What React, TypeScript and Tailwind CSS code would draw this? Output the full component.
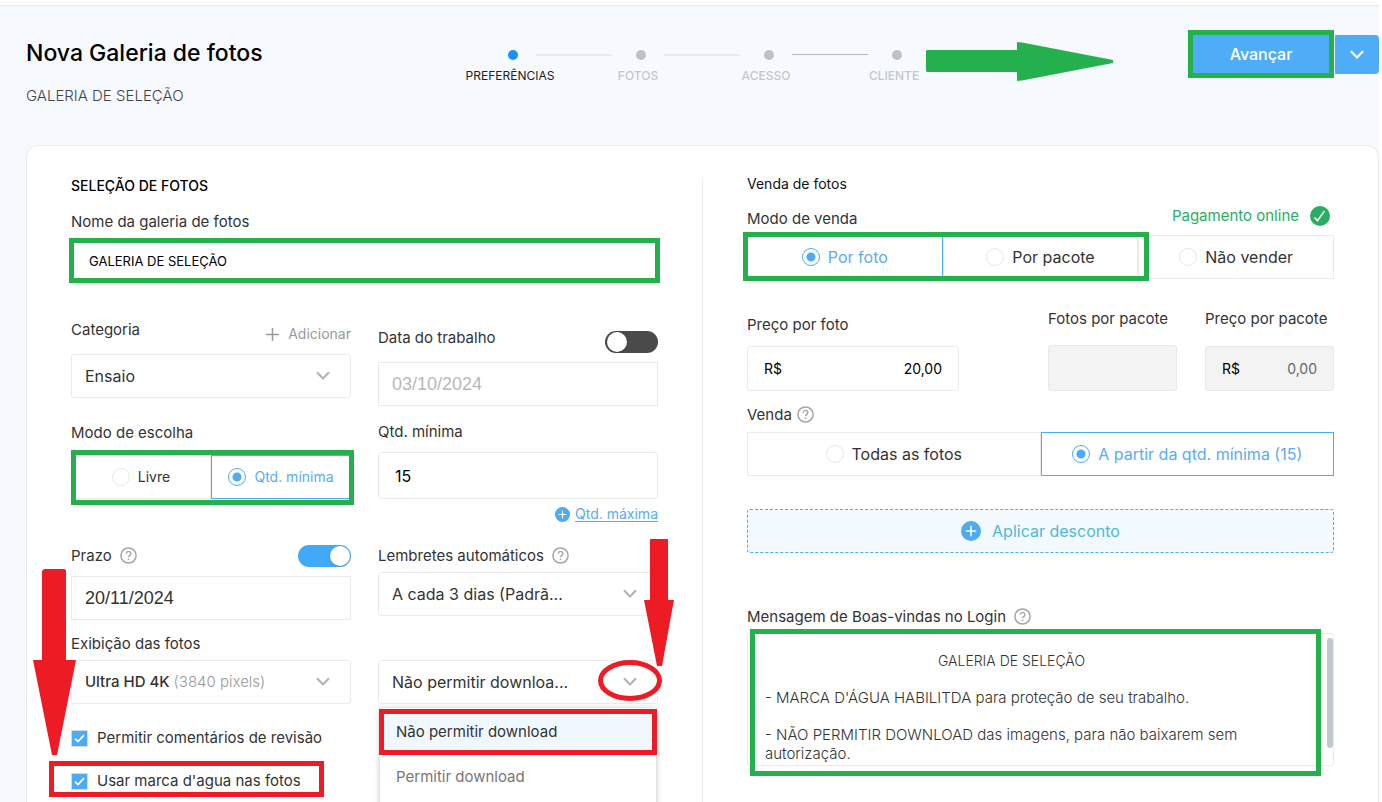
import { useState, type ReactNode } from "react";

const steps = ["PREFERÊNCIAS", "FOTOS", "ACESSO", "CLIENTE"];

function Chevron({ className = "" }: { className?: string }) {
    return (
        <svg
            className={`pointer-events-none ${className}`}
            width="14"
            height="10"
            viewBox="0 0 14 10"
            fill="none"
            stroke="currentColor"
            strokeWidth="2.2"
            aria-hidden="true"
        >
            <path d="M1 1.2 7 7.4l6-6.2" />
        </svg>
    );
}

function HelpIcon() {
    return (
        <svg className="mb-0.5" width="17" height="17" viewBox="0 0 17 17" fill="none" stroke="#a6a6a6" aria-hidden="true">
            <circle cx="8.5" cy="8.5" r="7.6" strokeWidth="1.5" />
            <path d="M6.2 6.7a2.3 2.3 0 1 1 3.6 1.9c-.9.6-1.3.9-1.3 1.7" strokeWidth="1.4" />
            <path d="M8.5 11.5v1.6" strokeWidth="1.5" />
        </svg>
    );
}

function PlusCircle({ size }: { size: number }) {
    return (
        <svg width={size} height={size} viewBox="0 0 20 20" aria-hidden="true">
            <circle cx="10" cy="10" r="10" fill="#4dabf5" />
            <path d="M10 4.8v10.4M4.8 10h10.4" stroke="#fff" strokeWidth="1.5" />
        </svg>
    );
}

function Switch({ label, defaultChecked }: { label: string; defaultChecked?: boolean }) {
    return (
        <span className="relative block h-[22px] w-[53px] shrink-0">
            <input
                type="checkbox"
                role="switch"
                aria-label={label}
                defaultChecked={defaultChecked}
                className="peer block h-full w-full appearance-none rounded-full bg-[#4a4a4a] checked:bg-[#42a9f8]"
            />
            <span className="pointer-events-none absolute top-px left-[2px] size-5 rounded-full bg-white shadow peer-checked:left-[32px]" />
        </span>
    );
}

type RadioProps = {
    name: string;
    children: ReactNode;
    defaultChecked?: boolean;
    small?: boolean;
};

function Radio({ name, children, defaultChecked, small }: RadioProps) {
    return (
        <label
            className={`flex h-11 flex-1 items-center justify-center gap-2 border border-[#ebebeb] text-[#333] has-checked:border-[#4dabf5] has-checked:text-[#5aacf5] ${
                small ? "text-sm" : "text-base"
            }`}
        >
            <input
                type="radio"
                name={name}
                defaultChecked={defaultChecked}
                className="size-[18px] appearance-none rounded-full border border-[#e6e6e6] checked:border-[#4dabf5] checked:bg-[radial-gradient(circle,#4dabf5_4px,transparent_5px)]"
            />
            {children}
        </label>
    );
}

function Check({ children }: { children: ReactNode }) {
    return (
        <label className="flex items-center gap-[9px] text-[15px] leading-5">
            <span className="relative size-[17px]">
                <input
                    type="checkbox"
                    defaultChecked
                    className="block size-full appearance-none border border-[#d4dde4] checked:bg-[#4dabf5]"
                />
                <svg
                    className="pointer-events-none absolute inset-0"
                    width="17"
                    height="17"
                    viewBox="0 0 17 17"
                    fill="none"
                    stroke="#fff"
                    strokeWidth="1.7"
                    aria-hidden="true"
                >
                    <path d="m4 8.6 3 3 6-6.4" />
                </svg>
            </span>
            {children}
        </label>
    );
}

// Highlight frame drawn over a control
function Mark({ className }: { className: string }) {
    return <div className={`pointer-events-none absolute z-10 border-5 ${className}`} />;
}

function Header() {
    return (
        <header className="flex h-[139px] items-start pl-[26px]">
            <div className="w-[438px] shrink-0 pt-8">
                <h1 className="text-[23px] leading-[30px] font-medium text-black">Nova Galeria de fotos</h1>
                <p className="mt-[18px] text-[15px] leading-5 font-light text-[#444]">GALERIA DE SELEÇÃO</p>
            </div>
            <ol className="flex shrink-0 pt-11">
                {steps.map((step, i) => (
                    <li key={step} className="flex">
                        {i > 0 && (
                            <span
                                className={`-mx-5 mt-1 w-[76px] ${
                                    i === 3 ? "h-px bg-[#b8b8b8]" : "h-[2px] bg-[#e9eaec]"
                                }`}
                            />
                        )}
                        <div className="flex w-[92px] flex-col items-center">
                            <span
                                className={`ml-[6px] size-[10px] rounded-full ${
                                    i === 0 ? "bg-[#1890ff]" : "bg-[#c1c1c1]"
                                }`}
                            />
                            <span
                                className={`mt-[6px] text-xs leading-5 ${
                                    i === 0 ? "text-[#222]" : "font-medium text-[#c5c7ca]"
                                }`}
                            >
                                {step}
                            </span>
                        </div>
                    </li>
                ))}
            </ol>
            <svg className="mt-9 -ml-[14px] shrink-0" width="188" height="39" viewBox="0 0 188 39" aria-hidden="true">
                <path d="M1 8h90V0l5 .6L187 18v3L96 38.4l-5 .6v-9H1l-1-1V9z" fill="#24b14d" />
            </svg>
            <div className="ml-auto flex pt-6">
                <div className="relative flex h-12 w-[146px] p-[5px]">
                    <button className="flex-1 bg-[#4fadf7] text-base font-medium text-white">Avançar</button>
                    <Mark className="inset-0 border-[#24b14d]" />
                </div>
                <button
                    aria-label="Mais opções"
                    className="mt-[5px] ml-px flex h-[39px] w-11 items-center justify-center rounded-r bg-[#4fadf7] text-white"
                >
                    <Chevron />
                </button>
            </div>
        </header>
    );
}

function CategoryColumn() {
    return (
        <div>
            <div className="flex h-[38px] items-start justify-between pt-1">
                <label htmlFor="categoria" className="text-[15px] leading-5">
                    Categoria
                </label>
                <button className="mt-1 flex items-center gap-[9px] text-sm leading-5 text-[#999]">
                    <svg width="13" height="13" viewBox="0 0 13 13" stroke="#999" strokeWidth="1.5" aria-hidden="true">
                        <path d="M6.5 0v13M0 6.5h13" />
                    </svg>
                    Adicionar
                </button>
            </div>
            <div className="relative">
                <select
                    id="categoria"
                    className="h-11 w-full appearance-none rounded-[3px] border border-[#ebebeb] bg-white px-[13px] text-base"
                >
                    <option>Ensaio</option>
                </select>
                <Chevron className="absolute top-[17px] right-[21px] text-[#b4b4b4]" />
            </div>

            <fieldset className="mt-[25px]">
                <legend className="text-[15px] leading-5">Modo de escolha</legend>
                <div className="relative mt-3 flex">
                    <Radio name="escolha" small>
                        Livre
                    </Radio>
                    <Radio name="escolha" small defaultChecked>
                        Qtd. mínima
                    </Radio>
                    <Mark className="-top-[5px] -right-[3px] left-0 h-[55px] border-[#24b14d]" />
                </div>
            </fieldset>

            <div className="relative mt-[46px]">
                <div className="flex h-[22px] items-center justify-between">
                    <label htmlFor="prazo" className="flex items-center gap-2 text-[15px] leading-5">
                        Prazo <HelpIcon />
                    </label>
                    <Switch label="Prazo" defaultChecked />
                </div>
                <input
                    id="prazo"
                    defaultValue="20/11/2024"
                    className="mt-[9px] block h-11 w-full border border-[#ebebeb] px-[13px] font-['Liberation_Sans',sans-serif] text-lg"
                />
                <svg
                    className="pointer-events-none absolute top-6 -left-[38px] z-10"
                    width="43"
                    height="187"
                    viewBox="0 0 43 187"
                    aria-hidden="true"
                >
                    <path d="M11 0h20l2 1v90h10l-1 5-18 90h-5L1 96l-1-5h9V2z" fill="#ed1c24" />
                </svg>
            </div>

            <div className="mt-[14px]">
                <p id="exibicao" className="text-[15px] leading-5">
                    Exibição das fotos
                </p>
                <button
                    aria-labelledby="exibicao"
                    aria-haspopup="listbox"
                    className="mt-[6px] flex h-11 w-full items-center rounded-[3px] border border-[#ebebeb] px-[13px] text-[15px]"
                >
                    <span className="font-medium">Ultra HD 4K</span>
                    <span className="ml-1 font-light text-[#999]">(3840 pixels)</span>
                    <Chevron className="mr-[7px] ml-auto text-[#b4b4b4]" />
                </button>
            </div>

            <div className="mt-6">
                <Check>Permitir comentários de revisão</Check>
            </div>
            <div className="relative mt-[23px]">
                <Check>Usar marca d'agua nas fotos</Check>
                <Mark className="-top-[10px] -left-[22px] h-9 w-[275px] border-[#ed1c24]" />
            </div>
        </div>
    );
}

function DateColumn() {
    return (
        <div className="pt-3">
            <div className="flex h-[25px] items-start justify-between">
                <label htmlFor="data" className="text-[15px] leading-5">
                    Data do trabalho
                </label>
                <div className="pt-[3px]">
                    <Switch label="Data do trabalho" />
                </div>
            </div>
            <input
                id="data"
                defaultValue="03/10/2024"
                className="mt-[9px] block h-11 w-full border border-[#ebebeb] px-[13px] font-['Liberation_Sans',sans-serif] text-lg text-[#b8b8b8]"
            />

            <label htmlFor="minima" className="mt-4 block text-[15px] leading-5">
                Qtd. mínima
            </label>
            <input
                id="minima"
                defaultValue="15"
                className="mt-[10px] block h-[47px] w-full rounded-[3px] border border-[#ebebeb] px-4 text-base text-black"
            />
            <div className="mt-[5px] flex items-center justify-end gap-[5px] text-sm leading-5">
                <PlusCircle size={15} />
                <a href="#maxima" className="text-[#5aacf5] underline underline-offset-2">
                    Qtd. máxima
                </a>
            </div>

            <div className="relative mt-[22px]">
                <label htmlFor="lembretes" className="flex items-center gap-2 text-[15px] leading-5">
                    Lembretes automáticos <HelpIcon />
                </label>
                <div className="relative mt-[6px]">
                    <select
                        id="lembretes"
                        className="h-11 w-full appearance-none rounded-[3px] border border-[#ebebeb] bg-white px-[13px] text-base"
                    >
                        <option>A cada 3 dias (Padrã...</option>
                    </select>
                    <Chevron className="absolute top-[17px] right-[21px] text-[#b4b4b4]" />
                </div>
                <svg
                    className="pointer-events-none absolute -top-[7px] -right-4 z-10"
                    width="30"
                    height="127"
                    viewBox="0 0 30 127"
                    aria-hidden="true"
                >
                    <path d="M6 0h18v61h6l-1 5-11 61h-5L1 66l-1-5h6z" fill="#ed1c24" />
                </svg>
            </div>

            <DownloadSelect />
        </div>
    );
}

function DownloadSelect() {
    const [open, setOpen] = useState(true);

    return (
        <div className="relative mt-11">
            <button
                aria-haspopup="listbox"
                aria-expanded={open}
                onClick={() => setOpen(!open)}
                className="flex h-11 w-full items-center rounded-[3px] border border-[#ebebeb] px-[13px] text-base"
            >
                Não permitir downloa...
                <Chevron className="mr-[7px] ml-auto text-[#b4b4b4]" />
            </button>
            <svg
                className="pointer-events-none absolute top-0 -right-1 z-10"
                width="64"
                height="41"
                viewBox="0 0 64 41"
                aria-hidden="true"
            >
                <ellipse cx="32" cy="20.5" rx="29.5" ry="18" fill="none" stroke="#ed1c24" strokeWidth="5" />
            </svg>
            {open && (
                <ul
                    role="listbox"
                    className="absolute top-12 right-0.5 left-0.5 rounded-sm bg-white pb-10 text-[15px] shadow-[0_1px_6px_rgba(0,0,0,0.25)]"
                >
                    <li role="option" aria-selected="true" className="relative mt-px bg-[#f0f8ff] px-4 py-[13px] leading-5">
                        Não permitir download
                        <Mark className="-inset-x-px inset-y-0 border-[#ed1c24]" />
                    </li>
                    <li role="option" aria-selected="false" className="px-4 py-3 leading-5 text-[#777]">
                        Permitir download
                    </li>
                </ul>
            )}
        </div>
    );
}

function SaleSection() {
    return (
        <section className="flex-1 pl-11">
            <h2 className="text-sm leading-5 text-[#111]">Venda de fotos</h2>
            <div className="mt-3 flex h-[29px] items-start justify-between">
                <p className="pt-[3px] text-[15px] leading-5">Modo de venda</p>
                <p className="flex items-center gap-[11px] pr-1 text-[15px] leading-5 text-[#29ae61]">
                    Pagamento online
                    <svg width="20" height="20" viewBox="0 0 20 20" fill="none" aria-hidden="true">
                        <circle cx="10" cy="10" r="10" fill="#27ae60" />
                        <path d="m4.5 11.5 3 3.2 6.8-9.6" stroke="#fff" strokeWidth="1.6" />
                    </svg>
                </p>
            </div>
            <div className="relative flex" role="radiogroup" aria-label="Modo de venda">
                <Radio name="modo-venda" defaultChecked>
                    Por foto
                </Radio>
                <Radio name="modo-venda">Por pacote</Radio>
                <Radio name="modo-venda">Não vender</Radio>
                <Mark className="-top-[3px] right-[185px] -bottom-0.5 -left-1 border-[#24b14d]" />
            </div>

            <div className="mt-[30px] flex items-end gap-7 text-[15px]">
                <div>
                    <label htmlFor="preco-foto" className="block leading-5">
                        Preço por foto
                    </label>
                    <div className="mt-[11px] flex h-[45px] w-[212px] items-center rounded-[3px] border border-[#ebebeb] px-4 text-sm text-black">
                        <span>R$</span>
                        <input
                            id="preco-foto"
                            defaultValue="20,00"
                            className="w-full min-w-0 text-right"
                        />
                    </div>
                </div>
                <div className="ml-auto w-[129px]">
                    <label htmlFor="fotos-pacote" className="block leading-5 whitespace-nowrap">
                        Fotos por pacote
                    </label>
                    <input
                        id="fotos-pacote"
                        disabled
                        className="mt-4 block h-[46px] w-full rounded-[3px] border border-[#e8e8e8] bg-[#f3f3f3] px-4"
                    />
                </div>
                <div className="w-[129px]">
                    <label htmlFor="preco-pacote" className="block leading-5 whitespace-nowrap">
                        Preço por pacote
                    </label>
                    <div className="mt-[17px] flex h-[45px] items-center rounded-[3px] border border-[#e8e8e8] bg-[#f3f3f3] px-4 text-sm">
                        <span className="text-black">R$</span>
                        <input
                            id="preco-pacote"
                            defaultValue="0,00"
                            disabled
                            className="w-full min-w-0 text-right text-[#666]"
                        />
                    </div>
                </div>
            </div>

            <div className="mt-[14px] flex items-center gap-[5px] text-[15px] leading-5">
                Venda <HelpIcon />
            </div>
            <div className="mt-[7px] flex" role="radiogroup" aria-label="Venda">
                <Radio name="venda">Todas as fotos</Radio>
                <Radio name="venda" defaultChecked>
                    A partir da qtd. mínima (15)
                </Radio>
            </div>

            <button className="mt-[33px] flex h-11 w-full items-center justify-center gap-[11px] rounded-[3px] border border-dashed border-[#4dabf5] bg-[#f2f9ff] text-base text-[#50b8d8]">
                <PlusCircle size={20} />
                Aplicar desconto
            </button>

            <p id="mensagem" className="mt-[54px] flex items-center gap-2 text-[15px] leading-5">
                Mensagem de Boas-vindas no Login <HelpIcon />
            </p>
            <div className="relative mt-[6px]">
                <div
                    role="textbox"
                    aria-labelledby="mensagem"
                    aria-multiline="true"
                    contentEditable
                    suppressContentEditableWarning
                    className="h-[133px] overflow-hidden rounded-[3px] border border-[#ebebeb] pt-[17px] pr-[75px] pl-[17px] text-[15px] leading-[19px] font-light text-[#333]"
                >
                    <p className="text-center text-sm leading-[19px]">GALERIA DE SELEÇÃO</p>
                    <p className="mt-[18px]">- MARCA D'ÁGUA HABILITDA para proteção de seu trabalho.</p>
                    <p className="mt-[18px]">
                        - NÃO PERMITIR DOWNLOAD das imagens, para não baixarem sem autorização.
                    </p>
                </div>
                <div className="absolute top-[5px] right-px h-[110px] w-[6px] rounded-full bg-[#c1c7cf]" />
                <Mark className="-top-1 right-[13px] left-[3px] h-[147px] border-[#24b14d]" />
            </div>
        </section>
    );
}

export default function App() {
    return (
        <div className="h-screen overflow-hidden bg-white pt-[5px] pr-[3px] font-[Inter,'Open_Sans',sans-serif] text-[#333]">
            <div className="flex h-full flex-col border-t border-[#e8eaed] bg-[#f6f9fe]">
                <Header />
                <main className="ml-[26px] flex flex-1 rounded-t-xl border border-b-0 border-[#e8eaed] bg-white px-11 pt-7">
                    <section className="flex-1 pt-0.5 pr-11">
                        <h2 className="text-sm leading-5 font-medium text-black">SELEÇÃO DE FOTOS</h2>
                        <label htmlFor="nome" className="mt-4 block text-[15px] leading-5">
                            Nome da galeria de fotos
                        </label>
                        <div className="relative mt-2">
                            <input
                                id="nome"
                                defaultValue="GALERIA DE SELEÇÃO"
                                className="block h-[41px] w-full border border-[#ebebeb] px-[17px] text-[13px] text-black"
                            />
                            <Mark className="-inset-x-0.5 -top-0.5 h-[45px] border-[#24b14d]" />
                        </div>
                        <div className="mt-[35px] grid grid-cols-2 gap-x-[27px]">
                            <CategoryColumn />
                            <DateColumn />
                        </div>
                    </section>
                    <div className="mt-[5px] w-px bg-[#e8eaed]" />
                    <SaleSection />
                </main>
            </div>
        </div>
    );
}
